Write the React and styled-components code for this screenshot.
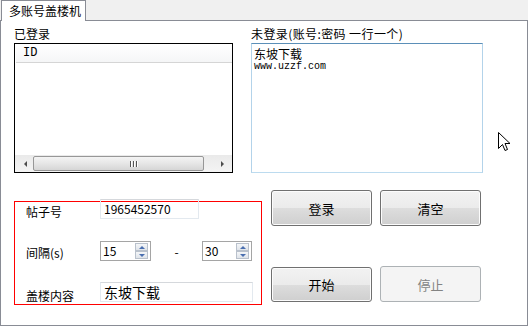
import React from "react";
import styled, { createGlobalStyle } from "styled-components";

const Global = createGlobalStyle`
  html, body { margin: 0; padding: 0; background: #fff; }
  body { font-family: "Noto Sans CJK SC", "DejaVu Sans", sans-serif; font-size: 12px; color: #000; }
`;

const Window = styled.div`
  position: relative;
  width: 531px;
  height: 328px;
  overflow: hidden;
`;

const TabStrip = styled.div`
  display: flex;
  height: 20px;
  width: 528px;
  background: #f0f0f0;
`;

const Tab = styled.div`
  position: relative;
  z-index: 1;
  margin-left: 1px;
  width: 85px;
  height: 21px;
  box-sizing: border-box;
  border: 1px solid #898c95;
  border-bottom: none;
  background: #fff;
  padding: 2px 0 0 7px;
  font-size: 12px;
  line-height: 15px;
  white-space: nowrap;
`;

const Panel = styled.div`
  box-sizing: border-box;
  width: 528px;
  height: 306px;
  border: 1px solid #898c95;
  background: #fff;
  padding: 5px 0 0 13px;
`;

const TopRow = styled.div`
  display: flex;
  gap: 18px;
`;

const Column = styled.div`
  display: flex;
  flex-direction: column;
  width: ${(p) => p.w}px;
`;

const Label = styled.div`
  height: 17px;
  line-height: 16px;
  font-size: 12px;
  letter-spacing: ${(p) => p.spacing || 0}px;
  white-space: nowrap;
`;

const ListBox = styled.div`
  box-sizing: border-box;
  height: 130px;
  border: 1px solid #000;
  display: flex;
  flex-direction: column;
  background: #fff;
`;

const Header = styled.div`
  margin: 0 0 0 1px;
  height: 19px;
  box-sizing: border-box;
  border-bottom: 1px solid #d5d5d5;
  background: linear-gradient(#ffffff, #f5f6f7);
  padding-left: 7px;
  font-family: "Liberation Mono", monospace;
  font-size: 12px;
  line-height: 18px;
`;

const ListBody = styled.div`
  flex: 1;
`;

const HScroll = styled.div`
  height: 17px;
  display: flex;
  align-items: center;
  background: linear-gradient(#eaeaea, #f4f4f4);
  padding: 0 2px;
`;

const Arrow = styled.div`
  width: 16px;
  display: flex;
  justify-content: center;
  &::before {
    content: "";
    border-top: 3px solid transparent;
    border-bottom: 3px solid transparent;
    ${(p) => (p.left ? "border-right: 3px solid #4d4d4d;" : "border-left: 3px solid #4d4d4d;")}
  }
`;

const Thumb = styled.div`
  flex: 1;
  height: 15px;
  margin: 0 10px 0 0;
  box-sizing: border-box;
  border: 1px solid #979797;
  border-radius: 2px;
  background: linear-gradient(#f4f4f4, #e6e6e6 50%, #d6d6d6);
  display: flex;
  justify-content: center;
  align-items: center;
  gap: 1px;
  padding-left: 30px;
`;

const Grip = styled.span`
  width: 1px;
  height: 6px;
  background: #555;
  box-shadow: 1px 0 0 #fff;
  margin-right: 1px;
`;

const TextArea = styled.div`
  box-sizing: border-box;
  height: 130px;
  border: 1px solid;
  border-color: #5b8fb8 #b3d3ea #bcdbef #b3d3ea;
  padding: 2px 2px;
`;

const AreaLine = styled.div`
  font-size: ${(p) => p.size}px;
  line-height: ${(p) => p.lh}px;
  font-family: ${(p) => (p.mono ? '"Liberation Mono", monospace' : 'inherit')};
  white-space: nowrap;
`;

const BottomRow = styled.div`
  display: flex;
  align-items: flex-start;
`;

const RedBox = styled.div`
  box-sizing: border-box;
  width: 248px;
  height: 104px;
  margin-top: 28px;
  border: 1px solid #ff0000;
  padding-left: 11px;
  display: flex;
  flex-direction: column;
`;

const FormRow = styled.div`
  display: flex;
  align-items: center;
  height: 20px;
  margin-top: ${(p) => p.top}px;
`;

const FieldLabel = styled.div`
  width: 74px;
  font-size: 12px;
  white-space: nowrap;
  padding-top: ${(p) => p.dy || 0}px;
`;

const TextInput = styled.div`
  box-sizing: border-box;
  width: ${(p) => p.w}px;
  height: 20px;
  border: 1px solid;
  border-color: #d5d8dc #e3e9ef #e3e9ef #e3e9ef;
  padding-left: 3px;
  font-size: ${(p) => p.size || 12}px;
  line-height: 18px;
  white-space: nowrap;
`;

const Spin = styled.div`
  box-sizing: border-box;
  width: ${(p) => p.w}px;
  height: 20px;
  border: 1px solid #a5a5a5;
  display: flex;
  align-items: center;
  padding: 0 2px 0 2px;
`;

const SpinValue = styled.div`
  flex: 1;
  font-size: 12px;
  line-height: 18px;
`;

const SpinButtons = styled.div`
  display: flex;
  flex-direction: column;
`;

const SpinBtn = styled.div`
  box-sizing: border-box;
  width: 13px;
  height: 8px;
  border: 1px solid #b9c1cc;
  background: linear-gradient(#f4f6f8, #dfe4ea);
  display: flex;
  justify-content: center;
  align-items: center;
  &::before {
    content: "";
    border-left: 3px solid transparent;
    border-right: 3px solid transparent;
    ${(p) => (p.up ? "border-bottom: 3px solid #4a6fb0;" : "border-top: 3px solid #4a6fb0;")}
  }
`;

const Dash = styled.div`
  width: 51px;
  text-align: center;
  font-size: 12px;
`;

const ButtonGrid = styled.div`
  display: grid;
  grid-template-columns: 101px 101px;
  grid-auto-rows: 36px;
  column-gap: 8px;
  row-gap: 40px;
  margin: 17px 0 0 9px;
`;

const Button = styled.div`
  box-sizing: border-box;
  border: 1px solid ${(p) => (p.disabled ? "#adb2b5" : "#707070")};
  border-radius: 3px;
  background: ${(p) =>
    p.disabled
      ? "#f4f4f4"
      : "linear-gradient(#f2f2f2 0%, #ebebeb 50%, #dddddd 51%, #cfcfcf 100%)"};
  box-shadow: inset 0 0 0 1px ${(p) => (p.disabled ? "transparent" : "#fcfcfc")};
  color: ${(p) => (p.disabled ? "#838383" : "#000")};
  display: flex;
  justify-content: center;
  align-items: center;
  font-size: 13px;
  margin-top: ${(p) => p.dy || 0}px;
`;

const Cursor = styled.svg`
  position: absolute;
  left: 498px;
  top: 132px;
`;

export default function App() {
  return (
    <Window>
      <Global />
      <TabStrip>
        <Tab>多账号盖楼机</Tab>
      </TabStrip>
      <Panel>
        <TopRow>
          <Column w={219}>
            <Label>已登录</Label>
            <ListBox>
              <Header>ID</Header>
              <ListBody />
              <HScroll>
                <Arrow left />
                <Thumb>
                  <Grip />
                  <Grip />
                  <Grip />
                </Thumb>
                <Arrow />
              </HScroll>
            </ListBox>
          </Column>
          <Column w={232}>
            <Label spacing={0.4}>未登录(账号:密码 一行一个)</Label>
            <TextArea>
              <AreaLine size={12} lh={15}>东坡下载</AreaLine>
              <AreaLine size={10} lh={11} mono>www.uzzf.com</AreaLine>
            </TextArea>
          </Column>
        </TopRow>
        <BottomRow>
          <RedBox>
            <FormRow top={-3}>
              <FieldLabel dy={5}>帖子号</FieldLabel>
              <TextInput w={99}>1965452570</TextInput>
            </FormRow>
            <FormRow top={22}>
              <FieldLabel dy={2}>间隔(s)</FieldLabel>
              <Spin w={51}>
                <SpinValue>15</SpinValue>
                <SpinButtons>
                  <SpinBtn up />
                  <SpinBtn />
                </SpinButtons>
              </Spin>
              <Dash>-</Dash>
              <Spin w={50}>
                <SpinValue>30</SpinValue>
                <SpinButtons>
                  <SpinBtn up />
                  <SpinBtn />
                </SpinButtons>
              </Spin>
            </FormRow>
            <FormRow top={21}>
              <FieldLabel dy={6}>盖楼内容</FieldLabel>
              <TextInput w={153} size={14}>东坡下载</TextInput>
            </FormRow>
          </RedBox>
          <ButtonGrid>
            <Button>登录</Button>
            <Button>清空</Button>
            <Button dy={1}>开始</Button>
            <Button disabled>停止</Button>
          </ButtonGrid>
        </BottomRow>
      </Panel>
      <Cursor width="13" height="20" viewBox="0 0 13 20">
        <path
          d="M0.5 0.5 L0.5 16.5 L4.5 12.5 L7 18.5 L9.5 17.5 L7 11.5 L12 11.5 Z"
          fill="#fff"
          stroke="#000"
          strokeWidth="1"
        />
      </Cursor>
    </Window>
  );
}
